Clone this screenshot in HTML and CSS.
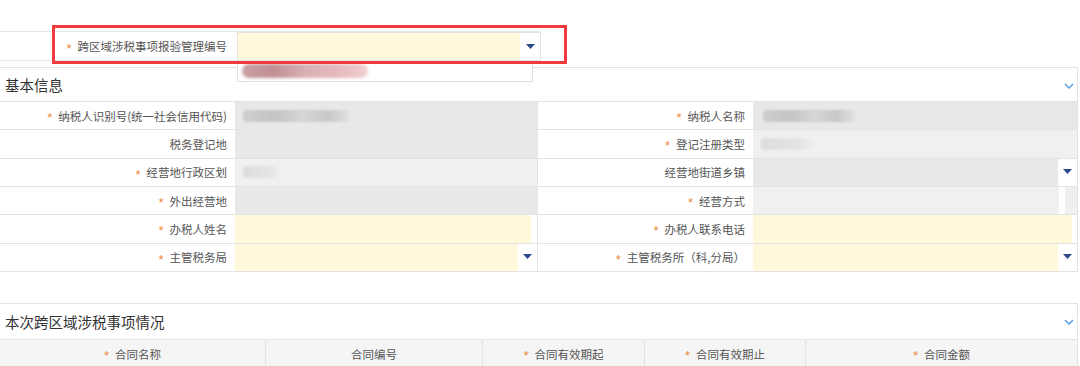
FILE: index.html
```html
<!DOCTYPE html>
<html lang="zh-CN">
<head>
    <meta charset="UTF-8">
    <meta name="viewport" content="width=device-width, initial-scale=1.0">
    <title>跨区域涉税事项报验</title>
    <link rel="stylesheet" href="styles.css">
</head>
<body>
<div class="page">
    <div class="top-row">
        <div class="top-label"><span class="req">*</span>跨区域涉税事项报验管理编号</div>
        <div class="combo">
            <div class="fill yellow"></div>
            <div class="btn"><svg class="arrow" width="9" height="6" viewBox="0 0 9 6"><polygon points="0,0 9,0 4.5,5" /></svg></div>
            <div class="dropdown"><span class="blur pink"></span></div>
        </div>
    </div>
    <div class="mark"></div>

    <div class="panel">
        <div class="panel-head">
            <span class="panel-title">基本信息</span>
            <svg class="chevron" width="10" height="6" viewBox="0 0 10 6"><polyline points="1,1 5,5 9,1" /></svg>
        </div>
        <div class="form-grid">
            <div class="cell label"><span class="req">*</span>纳税人识别号(统一社会信用代码)</div>
            <div class="cell value"><div class="fill grey"><span class="blur w107"></span></div></div>
            <div class="cell label"><span class="req">*</span>纳税人名称</div>
            <div class="cell value last"><div class="fill grey"><span class="blur w95"></span></div></div>

            <div class="cell label">税务登记地</div>
            <div class="cell value"><div class="fill grey"></div></div>
            <div class="cell label"><span class="req">*</span>登记注册类型</div>
            <div class="cell value last"><div class="fill light"><span class="blur w52 faint"></span></div></div>

            <div class="cell label"><span class="req">*</span>经营地行政区划</div>
            <div class="cell value"><div class="fill light"><span class="blur w36 faint"></span></div></div>
            <div class="cell label">经营地街道乡镇</div>
            <div class="cell value last"><div class="fill grey"></div><div class="btn"><svg class="arrow" width="9" height="6" viewBox="0 0 9 6"><polygon points="0,0 9,0 4.5,5" /></svg></div></div>

            <div class="cell label"><span class="req">*</span>外出经营地</div>
            <div class="cell value"><div class="fill grey"></div></div>
            <div class="cell label"><span class="req">*</span>经营方式</div>
            <div class="cell value last"><div class="fill light"></div><div class="gap"></div><div class="scroll"></div></div>

            <div class="cell label"><span class="req">*</span>办税人姓名</div>
            <div class="cell value"><div class="fill yellow"></div><div class="gap"></div></div>
            <div class="cell label"><span class="req">*</span>办税人联系电话</div>
            <div class="cell value last"><div class="fill yellow"></div><div class="gap narrow"></div></div>

            <div class="cell label"><span class="req">*</span>主管税务局</div>
            <div class="cell value"><div class="fill yellow"></div><div class="btn"><svg class="arrow" width="9" height="6" viewBox="0 0 9 6"><polygon points="0,0 9,0 4.5,5" /></svg></div></div>
            <div class="cell label"><span class="req">*</span>主管税务所（科,分局）</div>
            <div class="cell value last"><div class="fill yellow"></div><div class="btn"><svg class="arrow" width="9" height="6" viewBox="0 0 9 6"><polygon points="0,0 9,0 4.5,5" /></svg></div></div>
        </div>
    </div>

    <div class="panel second">
        <div class="panel-head tall">
            <span class="panel-title">本次跨区域涉税事项情况</span>
            <svg class="chevron" width="10" height="6" viewBox="0 0 10 6"><polyline points="1,1 5,5 9,1" /></svg>
        </div>
        <div class="table-head">
            <div class="th"><span class="req">*</span>合同名称</div>
            <div class="th">合同编号</div>
            <div class="th"><span class="req">*</span>合同有效期起</div>
            <div class="th"><span class="req">*</span>合同有效期止</div>
            <div class="th"><span class="req">*</span>合同金额</div>
        </div>
    </div>
</div>
</body>
</html>
```

FILE: styles.css
```css
body {
    margin: 0;
    background-color: #fff;
    font-family: "Noto Sans CJK SC", "Liberation Sans", sans-serif;
    color: #555;
    font-size: 11.5px;
}

.page {
    position: relative;
    width: 1080px;
    height: 366px;
    overflow: hidden;
    padding-top: 31px;
    box-sizing: border-box;
}

.req {
    color: #f0883a;
    font-family: "Liberation Sans", sans-serif;
    font-size: 13px;
    margin-right: 6px;
    position: relative;
    top: 2px;
}

/* top row with the highlighted field */
.top-row {
    display: flex;
    align-items: flex-start;
    width: 541px;
    height: 28px;
    border-top: 1px solid #e6e6e6;
    border-bottom: 1px solid #e6e6e6;
}

.top-label {
    width: 237px;
    height: 28px;
    line-height: 28px;
    text-align: right;
    padding-right: 10px;
    box-sizing: border-box;
    white-space: nowrap;
}

.combo {
    position: relative;
    display: flex;
    width: 304px;
    height: 29px;
    border: 1px solid #e2e2e2;
    box-sizing: border-box;
    background-color: #fff;
}

.dropdown {
    position: absolute;
    left: -1px;
    top: 28px;
    width: 296px;
    height: 21px;
    border: 1px solid #e0e0e0;
    box-sizing: border-box;
    background-color: #fff;
    z-index: 2;
}

.mark {
    position: absolute;
    left: 52px;
    top: 25px;
    width: 515px;
    height: 39px;
    border: 3px solid #ef3a3e;
    box-sizing: border-box;
    z-index: 3;
}

/* panels */
.panel {
    width: 1078px;
    margin-top: 6px;
    border-top: 1px solid #e3e3e3;
    border-right: 1px solid #e3e3e3;
    box-sizing: border-box;
}

.panel.second {
    margin-top: 31px;
}

.panel-head {
    display: flex;
    align-items: center;
    justify-content: space-between;
    height: 33px;
    padding: 0 3px 0 5px;
    border-bottom: 1px solid #e3e3e3;
}

.panel-head.tall {
    height: 35px;
}

.panel-title {
    font-size: 14.5px;
    color: #333;
}

.chevron {
    fill: none;
    stroke: #5aa0e6;
    stroke-width: 1.5;
    margin-top: 2px;
}

.form-grid {
    display: grid;
    grid-template-columns: 235px 303px 215px 1fr;
    grid-auto-rows: 28.33px;
}

.cell {
    display: flex;
    border-bottom: 1px solid #e3e3e3;
    box-sizing: border-box;
}

.cell.label {
    justify-content: flex-end;
    align-items: center;
    padding-right: 8px;
    white-space: nowrap;
}

.cell.value {
    border-right: 1px solid #e3e3e3;
}

.cell.value.last {
    border-right: none;
}

.fill {
    flex: 1;
    display: flex;
    align-items: center;
    padding-left: 8px;
}

.grey {
    background-color: #e8e8e8;
}

.light {
    background-color: #f0f0f0;
}

.yellow {
    background-color: #fff8db;
}

.btn {
    width: 19px;
    display: flex;
    align-items: center;
    justify-content: center;
    background-color: #fff;
}

.combo .btn {
    width: 20px;
}

.arrow {
    fill: #2d4b8c;
}

.gap {
    width: 6px;
    background-color: #fff;
}

.gap.narrow {
    width: 5px;
}

.scroll {
    width: 12px;
    background-color: #efefef;
}

/* redacted values */
.blur {
    display: block;
    height: 12px;
    border-radius: 4px;
    background: linear-gradient(90deg, #cfcfcf 0%, #c4c4c4 30%, #d6d6d6 55%, #c8c8c8 80%, #e2e2e2 100%);
    filter: blur(1.2px);
}

.blur.w107 { width: 107px; }
.blur.w95 { width: 92px; margin-left: 2px; }
.blur.w52 { width: 52px; }
.blur.w36 { width: 36px; }

.blur.faint {
    background: linear-gradient(90deg, #dcdcdc, #e4e4e4 70%, #ececec);
}

.blur.pink {
    width: 126px;
    height: 14px;
    margin: 2px 0 0 4px;
    border-radius: 7px;
    background: linear-gradient(90deg, #c9a0a3 0%, #bf8f93 25%, #d8b0b3 50%, #e4b9bc 75%, #f3d0d0 100%);
    filter: blur(1.5px);
}

/* contract table */
.table-head {
    display: grid;
    grid-template-columns: 266px 217px 162px 161px 1fr;
    height: 28px;
    background-color: #f5f5f5;
}

.th {
    display: flex;
    align-items: center;
    justify-content: center;
    border-right: 1px solid #e3e3e3;
    white-space: nowrap;
}

.th:last-child {
    border-right: none;
}
```
